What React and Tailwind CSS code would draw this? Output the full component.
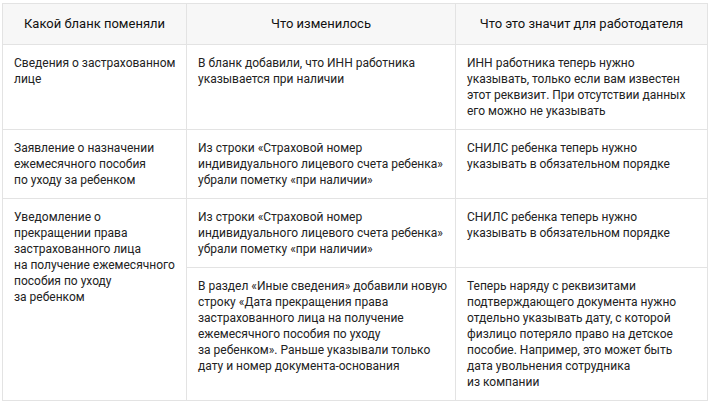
const rows = [
  {
    a: ['Сведения о застрахованном', 'лице'],
    b: ['В бланк добавили, что ИНН работника', 'указывается при наличии'],
    c: ['ИНН работника теперь нужно', 'указывать, только если вам известен', 'этот реквизит. При отсутствии данных', 'его можно не указывать'],
  },
  {
    a: ['Заявление о назначении', 'ежемесячного пособия', 'по уходу за ребенком'],
    b: ['Из строки «Страховой номер', 'индивидуального лицевого счета ребенка»', 'убрали пометку «при наличии»'],
    c: ['СНИЛС ребенка теперь нужно', 'указывать в обязательном порядке'],
  },
];

const lastA = ['Уведомление о', 'прекращении права', 'застрахованного лица', 'на получение ежемесячного', 'пособия по уходу', 'за ребенком'];
const lastB1 = ['Из строки «Страховой номер', 'индивидуального лицевого счета ребенка»', 'убрали пометку «при наличии»'];
const lastC1 = ['СНИЛС ребенка теперь нужно', 'указывать в обязательном порядке'];
const lastB2 = ['В раздел «Иные сведения» добавили новую', 'строку «Дата прекращения права', 'застрахованного лица на получение', 'ежемесячного пособия по уходу', 'за ребенком». Раньше указывали только', 'дату и номер документа-основания'];
const lastC2 = ['Теперь наряду с реквизитами', 'подтверждающего документа нужно', 'отдельно указывать дату, с которой', 'физлицо потеряло право на детское', 'пособие. Например, это может быть', 'дата увольнения сотрудника', 'из компании'];

function Lines({ lines }) {
  return lines.map((l, i) => (
    <span key={i} className="block whitespace-nowrap">{l}</span>
  ));
}

const td = 'border border-[#e3e3e3] align-top px-[11px] pt-[10px] pb-[10px] text-left';
const th = 'border border-[#e3e3e3] font-normal text-[13px] text-center text-[#111]';

export default function App() {
  return (
    <div className="bg-white w-[712px] h-[402px] pt-[3px] pl-[2px] font-['Roboto',sans-serif] text-[12px] leading-[16px] text-[#222]">
      <table className="border-collapse w-[705px] table-fixed">
        <colgroup>
          <col className="w-[184px]" />
          <col className="w-[269px]" />
          <col className="w-[252px]" />
        </colgroup>
        <thead>
          <tr className="bg-[#f7f7f7] h-[41px]">
            <th className={th}>Какой бланк поменяли</th>
            <th className={th}>Что изменилось</th>
            <th className={th}>Что это значит для работодателя</th>
          </tr>
        </thead>
        <tbody>
          {rows.map((r, i) => (
            <tr key={i}>
              <td className={td}><Lines lines={r.a} /></td>
              <td className={td}><Lines lines={r.b} /></td>
              <td className={td}><Lines lines={r.c} /></td>
            </tr>
          ))}
          <tr>
            <td rowSpan={2} className={td}><Lines lines={lastA} /></td>
            <td className={td}><Lines lines={lastB1} /></td>
            <td className={td}><Lines lines={lastC1} /></td>
          </tr>
          <tr>
            <td className={td}><Lines lines={lastB2} /></td>
            <td className={td}><Lines lines={lastC2} /></td>
          </tr>
        </tbody>
      </table>
    </div>
  );
}
